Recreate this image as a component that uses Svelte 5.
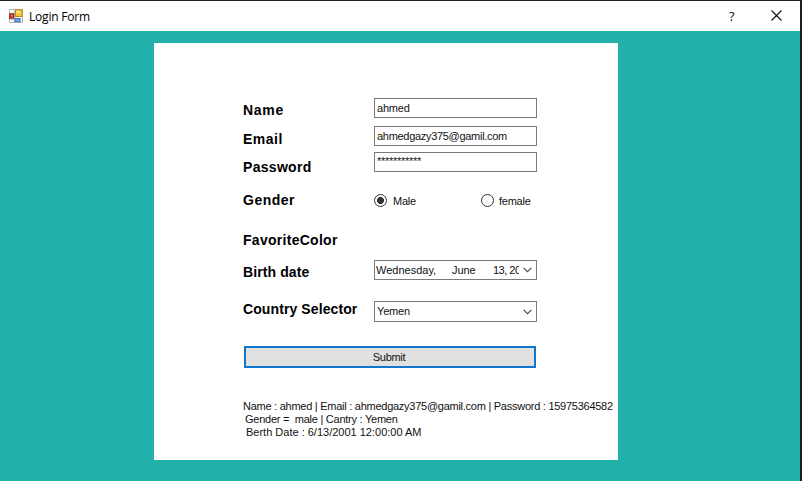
<script>
  let name = $state('ahmed');
  let email = $state('ahmedgazy375@gamil.com');
  let gender = $state('Male');
  const country = 'Yemen';
</script>

{#snippet chevron()}
  <svg class="chevron" width="9" height="6" viewBox="0 0 9 6"><path d="M.6 .8 4.5 4.7 8.4 .8" fill="none" stroke="#484848" stroke-width="1.1" /></svg>
{/snippet}

<div class="window">
  <header>
    <svg class="logo" width="14" height="14" viewBox="0 0 14 14">
      <rect x=".5" y=".5" width="13" height="13" fill="#f5f5f5" stroke="#b9b9b9" />
      <path d="M5.5 1v12M1 4.5h4M1 10.5h4M10.5 9v4" stroke="#c4c4c4" />
      <rect x="6.5" y=".8" width="6.7" height="6.7" fill="#f6c331" stroke="#b58a20" />
      <rect x="7.5" y="1.7" width="3.5" height="2.5" fill="#ffe58b" />
      <rect x=".7" y="4.8" width="4" height="4.4" fill="#c9443a" stroke="#952018" />
      <rect x="2" y="6" width="1.3" height="1.3" fill="#f3a095" />
      <rect x="6" y="9.5" width="5" height="3.3" fill="#6fa4e4" stroke="#3e70b8" />
    </svg>
    <span class="title">Login Form</span>
    <span class="help">?</span>
    <svg class="close" width="11" height="11" viewBox="0 0 11 11"><path d="M.5 .5l10 10M10.5 .5l-10 10" stroke="#111" stroke-width="1.1" /></svg>
  </header>
  <main>
    <form>
      <div class="row name"><label for="n">Name</label><input id="n" bind:value={name} /></div>
      <div class="row email"><label for="e">Email</label><input id="e" bind:value={email} /></div>
      <div class="row password"><span class="label">Password</span><div class="field stars">***********</div></div>
      <div class="row gender">
        <span class="label">Gender</span>
        {#each ['Male', 'female'] as option}
          <button type="button" class="radio" onclick={() => (gender = option)}>
            <i class:on={gender === option}></i><span>{option}</span>
          </button>
        {/each}
      </div>
      <div class="row color"><span class="label">FavoriteColor</span></div>
      <div class="row birth">
        <span class="label">Birth date</span>
        <div class="field date">
          <div class="value"><span class="day">Wednesday,</span><span class="month">June</span><span class="year">13, 2001</span></div>
          {@render chevron()}
        </div>
      </div>
      <div class="row country">
        <span class="label">Country Selector</span>
        <div class="field select"><div class="value">{country}</div>{@render chevron()}</div>
      </div>
      <button type="button" class="submit">Submit</button>
      <div class="result">
        <div class="l1">Name : ahmed | Email : ahmedgazy375@gamil.com | Password : 15975364582</div>
        <div class="l2">Gender = &nbsp;male | Cantry : Yemen</div>
        <div class="l3">Berth Date : 6/13/2001 12:00:00 AM</div>
      </div>
    </form>
  </main>
</div>

<style>
  :global(body) { margin: 0; }
  .window {
    box-sizing: border-box;
    width: 802px;
    height: 481px;
    display: flex;
    flex-direction: column;
    background: #fff;
    border-top: 1px solid #231f20;
    border-right: 2px solid #15201f;
    overflow: hidden;
    color: #111;
    font: 11px/13px "Liberation Sans", Arial, sans-serif;
  }
  header {
    height: 30px;
    flex: none;
    display: flex;
    align-items: center;
    padding: 0 18px 0 9px;
    box-sizing: border-box;
    font-family: "Open Sans", sans-serif;
  }
  .title { margin-left: 6px; font-size: 12px; letter-spacing: -.2px; flex: 1; color: #000; }
  .help { font-size: 13px; width: 7px; margin-right: 35px; font-weight: 500; }
  .close { position: relative; top: -1px; }
  main { flex: 1; background: #21b1aa; padding: 12px 0 0 154px; }
  form {
    box-sizing: border-box;
    width: 464px;
    height: 417px;
    padding: 55px 0 0 89px;
    background: #fff;
    display: flex;
    flex-direction: column;
  }
  .row { display: flex; align-items: flex-start; flex: none; height: 20px; }
  label, .label {
    width: 131px;
    flex: none;
    font-weight: bold;
    font-size: 14px;
    line-height: 16px;
    letter-spacing: .1px;
    color: #000;
    white-space: nowrap;
  }
  .name label { margin-top: 4px; letter-spacing: .7px; }
  .email { margin-top: 8px; }
  .email label { margin-top: 5px; letter-spacing: .5px; }
  .password { margin-top: 6px; }
  .password .label { margin-top: 7px; letter-spacing: .3px; }
  .gender { margin-top: 20px; height: 18px; }
  .gender .label { letter-spacing: .5px; }
  .color { margin-top: 22px; height: 16px; }
  .color .label { letter-spacing: .28px; }
  .birth { margin-top: 12px; }
  .birth .label { margin-top: 4px; }
  .country { margin-top: 21px; height: 21px; }
  input, .field {
    box-sizing: border-box;
    width: 163px;
    height: 100%;
    margin: 0;
    border: 1px solid #7a7a7a;
    border-radius: 0;
    background: #fff;
    padding: 0 2px;
    font: inherit;
    color: #111;
    outline: none;
  }
  input { letter-spacing: -.3px; }
  .name input { letter-spacing: -.2px; }
  .stars { padding-top: 2px; letter-spacing: -.28px; }
  .date, .select { display: flex; align-items: center; padding-right: 4px; }
  .date { padding-left: 1px; }
  .value { flex: 1; overflow: hidden; white-space: nowrap; display: flex; margin-right: 4px; }
  .select .value { letter-spacing: -.2px; }
  .day { width: 76px; flex: none; }
  .month { width: 41px; flex: none; letter-spacing: -.1px; }
  .year { letter-spacing: -.5px; }
  .chevron { flex: none; }
  .radio { display: flex; align-items: center; height: 18px; width: 107px; padding: 0; border: 0; background: none; font: inherit; letter-spacing: -.25px; color: #111; }
  .radio:last-child { width: 60px; }
  .radio i { box-sizing: border-box; width: 13px; height: 13px; border: 1px solid #333; border-radius: 50%; margin-right: 6px; flex: none; position: relative; top: -.5px; }
  .radio:last-child i { margin-right: 5px; }
  .radio i.on { background: radial-gradient(circle, #333 3.2px, #fff 3.8px); }
  .submit {
    width: 292px;
    height: 22px;
    flex: none;
    margin: 24px 0 0 1px;
    padding: 0 2px 0 0;
    border: 2px solid #1177cc;
    background: #e1e1e1;
    font: inherit;
    letter-spacing: -.3px;
    color: #111;
  }
  .result { margin-top: 32px; white-space: nowrap; }
  .l1 { letter-spacing: -.26px; }
  .l2 { padding-left: 2px; letter-spacing: -.25px; }
  .l3 { padding-left: 3px; }
</style>
